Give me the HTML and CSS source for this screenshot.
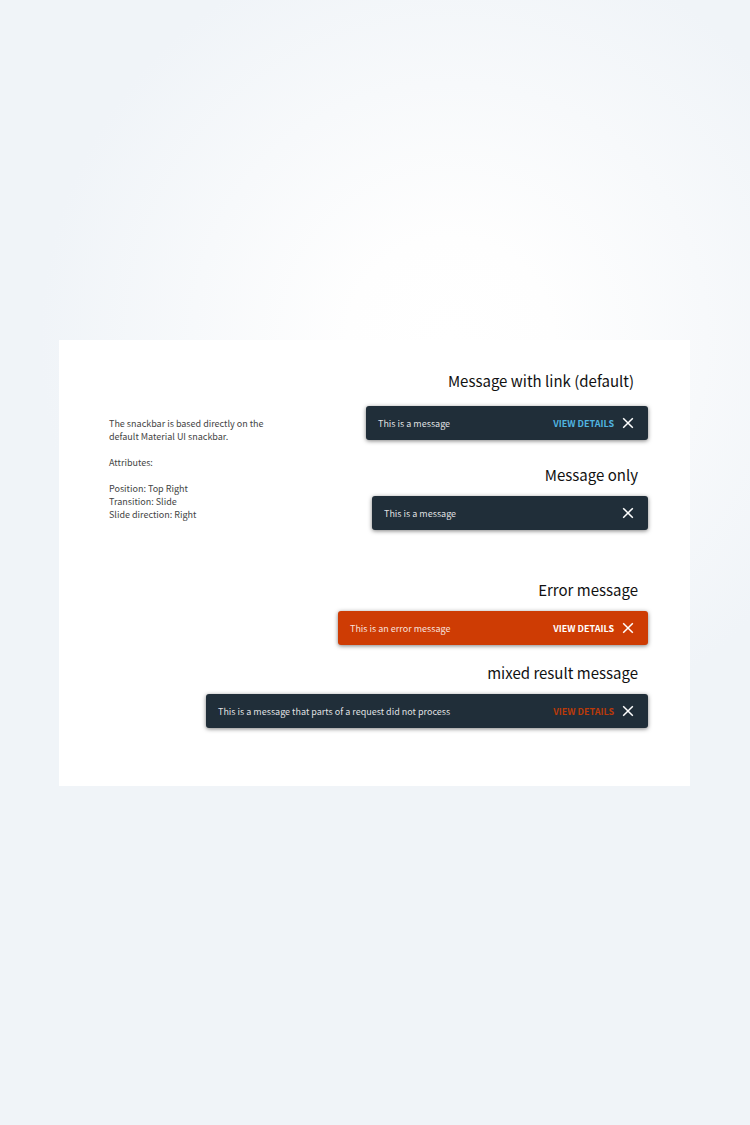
FILE: index.html
```html
<!DOCTYPE html>
<html lang="en">
<head>
<meta charset="utf-8">
<meta name="viewport" content="width=device-width, initial-scale=1">
<title>Snackbar</title>
<link rel="stylesheet" href="styles.css">
</head>
<body>
<main class="card">
  <div class="intro">
    <section class="notes">
      <p>The snackbar is based directly on the default Material UI snackbar.</p>
      <p>Attributes:</p>
      <p>Position: Top Right<br>Transition: Slide<br>Slide direction: Right</p>
    </section>
    <div class="stack">
      <section class="example example-link">
        <h2>Message with link (default)</h2>
        <div class="snackbar snackbar-link" role="status">
          <span class="message">This is a message</span>
          <a class="action" href="#">VIEW DETAILS</a>
          <button class="close" type="button" aria-label="Close"><svg viewBox="0 0 12 12"><path d="M1.200 1.200l9.600 9.600M10.800 1.200l-9.600 9.600"/></svg></button>
        </div>
      </section>
      <section class="example example-plain">
        <h2>Message only</h2>
        <div class="snackbar snackbar-plain" role="status">
          <span class="message">This is a message</span>
          <button class="close" type="button" aria-label="Close"><svg viewBox="0 0 12 12"><path d="M1.200 1.200l9.600 9.600M10.800 1.200l-9.600 9.600"/></svg></button>
        </div>
      </section>
    </div>
  </div>
  <section class="example example-error">
    <h2>Error message</h2>
    <div class="snackbar snackbar-error" role="alert">
      <span class="message">This is an error message</span>
      <a class="action" href="#">VIEW DETAILS</a>
      <button class="close" type="button" aria-label="Close"><svg viewBox="0 0 12 12"><path d="M1.200 1.200l9.600 9.600M10.800 1.200l-9.600 9.600"/></svg></button>
    </div>
  </section>
  <section class="example example-mixed">
    <h2>mixed result message</h2>
    <div class="snackbar snackbar-mixed" role="status">
      <span class="message">This is a message that parts of a request did not process</span>
      <a class="action" href="#">VIEW DETAILS</a>
      <button class="close" type="button" aria-label="Close"><svg viewBox="0 0 12 12"><path d="M1.200 1.200l9.600 9.600M10.800 1.200l-9.600 9.600"/></svg></button>
    </div>
  </section>
</main>
</body>
</html>
```
FILE: styles.css
```css
* {
  box-sizing: border-box;
}

body {
  margin: 0;
  min-height: 100vh;
  padding: 25px 60px 24px 59px;
  display: flex;
  align-items: center;
  background: radial-gradient(circle 410px at 60% 340px, #ffffff 0%, #fefefe 25%, #f0f4f8 100%) #f0f4f8;
  font-family: "Noto Sans CJK SC", "Noto Sans", sans-serif;
  font-size: 9px;
  line-height: 13px;
}

.card {
  flex: 1;
  min-width: 0;
  padding: 29px 42px 58px 50px;
  background: #ffffff;
}

.intro {
  display: flex;
  justify-content: space-between;
  gap: 24px;
}

.notes {
  width: 160px;
  padding-top: 48px;
  color: #444444;
}

.notes p {
  margin: 0 0 13px;
}

.stack,
.example {
  display: flex;
  flex-direction: column;
  align-items: flex-end;
}

h2 {
  margin: 0;
  padding-right: 10px;
  color: #111111;
  font-size: 15px;
  font-weight: 400;
  line-height: 24px;
}

.example {
  gap: 9px;
}

.example-link {
  gap: 13px;
}

.example-link h2 {
  padding-right: 14px;
}

.example-plain {
  margin-top: 23px;
}

.example-error {
  margin-top: 44px;
}

.example-mixed {
  margin-top: 16px;
}

.snackbar {
  display: flex;
  align-items: center;
  max-width: 100%;
  min-height: 34px;
  padding: 0 12px;
  border-radius: 3px;
  background: #202e39;
  box-shadow: 0 1px 4px rgba(0, 0, 0, 0.5);
  color: #ffffff;
}

.snackbar-link {
  width: 282px;
}

.snackbar-plain {
  width: 276px;
}

.snackbar-error {
  width: 310px;
  background: #ce3c04;
}

.snackbar-mixed {
  width: 442px;
}

.message {
  flex: 1;
  color: rgba(255, 255, 255, 0.87);
}

.action {
  margin-right: 6px;
  color: #ffffff;
  font-weight: 700;
  text-decoration: none;
}

.snackbar-link .action {
  color: #50b4e0;
}

.snackbar-mixed .action {
  color: #ba3a09;
}

.close {
  width: 16px;
  height: 16px;
  padding: 2px;
  border: 0;
  background: none;
  color: #ffffff;
  cursor: pointer;
}

.close svg {
  display: block;
  width: 12px;
  height: 12px;
  fill: none;
  stroke: currentColor;
  stroke-width: 1.5;
}
```
